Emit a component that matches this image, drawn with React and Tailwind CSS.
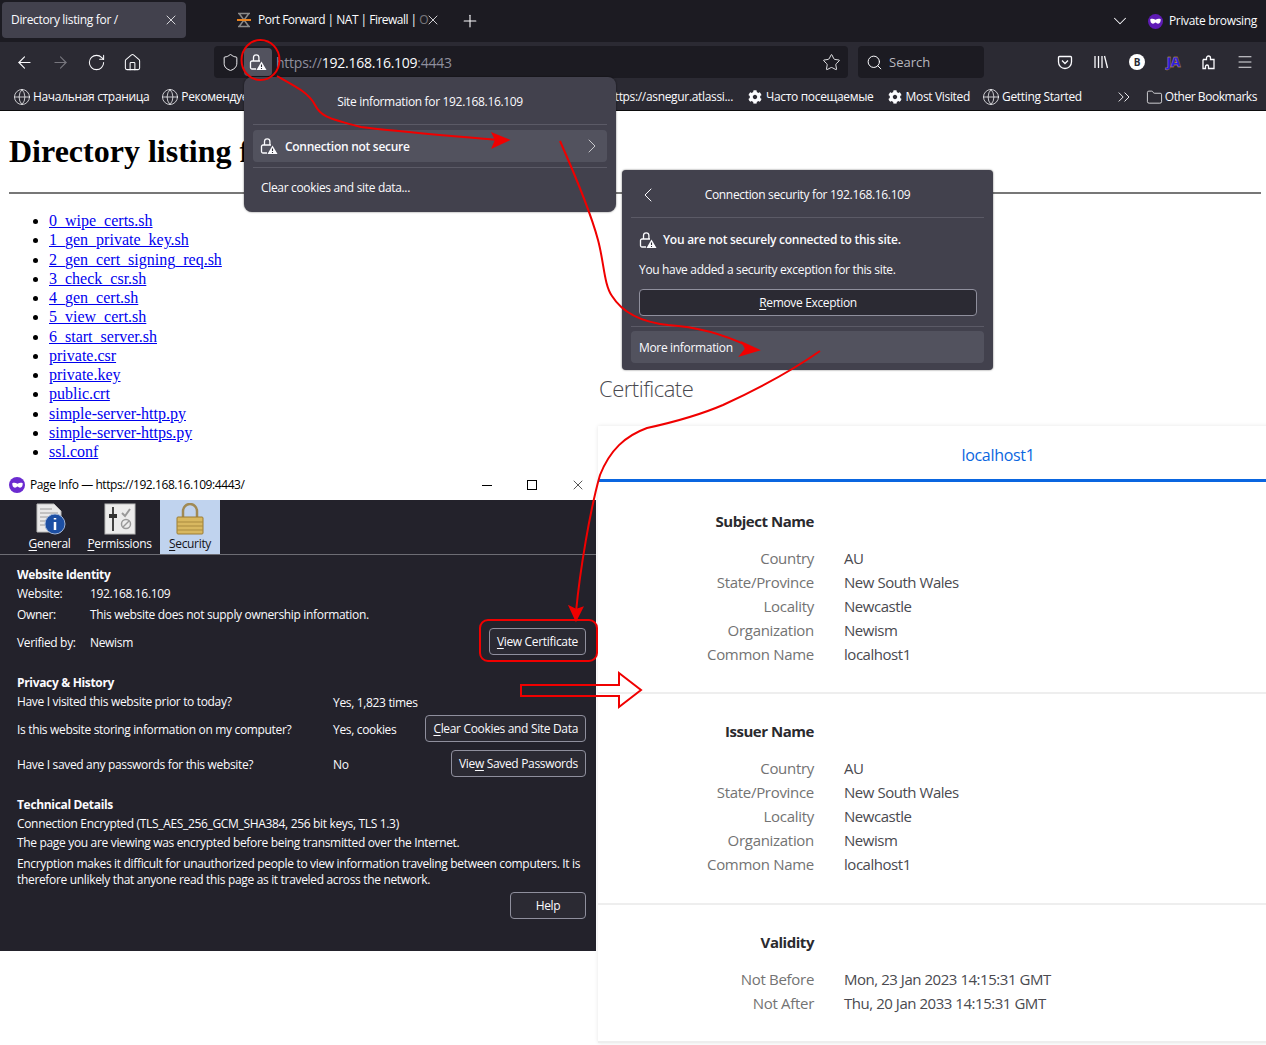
import {
  ArrowLeft,
  ArrowRight,
  RotateCw,
  Home,
  Shield,
  Star,
  Search,
  Globe,
  X,
  Plus,
  ChevronDown,
  ChevronRight,
  ChevronLeft,
  ChevronsRight,
  Folder,
  Menu,
} from 'lucide-react';
import { FaCog } from 'react-icons/fa';

const ui = { fontFamily: '"Open Sans", "Noto Sans", sans-serif' };

const files = [
  '0_wipe_certs.sh',
  '1_gen_private_key.sh',
  '2_gen_cert_signing_req.sh',
  '3_check_csr.sh',
  '4_gen_cert.sh',
  '5_view_cert.sh',
  '6_start_server.sh',
  'private.csr',
  'private.key',
  'public.crt',
  'simple-server-http.py',
  'simple-server-https.py',
  'ssl.conf',
];

const LockWarn = ({ className = 'w-[18px] h-[18px]' }) => (
  <svg viewBox="0 0 18 18" className={className} fill="none">
    <path d="M4.500 8V4.500a2.700 2.700 0 0 1 5.400 0V8" stroke="#fbfbfe" strokeWidth="1.300" />
    <path d="M7 16H3A1.500 1.500 0 0 1 1.500 14.500V9.500A1.500 1.500 0 0 1 3 8H11" stroke="#fbfbfe" strokeWidth="1.300" />
    <path d="M12.500 8.500l5 8.500h-10z" fill="#fbfbfe" />
    <path d="M12.500 11.500v2.500M12.500 15v1" stroke="#2b2a33" strokeWidth="1.100" />
  </svg>
);

const PrivateMask = () => (
  <svg viewBox="0 0 12 8" className="h-[7px] w-[11px]">
    <path d="M0 1.500C2 .500 4 1 6 2c2-1 4-1.500 6-.500 0 3-1 5-3 5-1.500 0-2-1.500-3-1.500S4.500 6.500 3 6.500c-2 0-3-2-3-5z" fill="#fff" />
  </svg>
);

const Bookmark = ({ icon = 'globe', children }) => (
  <div className="flex shrink-0 items-center whitespace-nowrap">
    {icon === 'globe' ? <Globe size={18} strokeWidth={1} /> : <FaCog size={14} className="mx-[2px]" />}
    <span className="ml-[2px]">{children}</span>
  </div>
);

const U = ({ children }) => <span className="underline underline-offset-2">{children}</span>;

const DialogButton = ({ children, className = '' }) => (
  <button className={`h-[27px] whitespace-nowrap rounded-[4px] border border-[#8f8f9d] bg-[#2b2a33] px-[7px] text-[12px] text-[#fbfbfe] ${className}`}>
    {children}
  </button>
);

const CertRow = ({ label, value }) => (
  <div className="flex h-[24px] items-center">
    <div className="w-[216px] text-right tracking-[-0.3px] text-[#737373]">{label}</div>
    <div className="ml-[30px] text-[#4a4a4f]">{value}</div>
  </div>
);

const CertSection = ({ title, rows, className = '' }) => (
  <section className={`border-b-2 border-[#eeeeee] ${className}`}>
    <div className="flex h-[24px] items-center">
      <div className="w-[216px] text-right font-bold text-[#2a2a2e]">{title}</div>
    </div>
    <div className="mt-[13px]">
      {rows.map(([label, value]) => (
        <CertRow key={label} label={label} value={value} />
      ))}
    </div>
  </section>
);

const names = [
  ['Country', 'AU'],
  ['State/Province', 'New South Wales'],
  ['Locality', 'Newcastle'],
  ['Organization', 'Newism'],
  ['Common Name', 'localhost1'],
];

function TabBar() {
  return (
    <div className="flex h-[42px] items-center bg-[#1c1b22] pl-[2px] text-[12px] tracking-[-0.33px] text-[#fbfbfe]">
      <div className="mt-[-2px] flex h-[36px] w-[184px] items-center justify-between rounded-[4px] bg-[#42414d] pl-[9px] pr-[7px]">
        <span>Directory listing for /</span>
        <X size={16} strokeWidth={1.200} />
      </div>
      <div className="ml-[50px] mt-[-2px] flex w-[204px] items-center">
        <svg viewBox="0 0 16 16" className="mr-[6px] h-[16px] w-[16px] shrink-0" fill="none">
          <path d="M2 1.500h12M2 14.500h12M3.500 2l4.500 6-4.500 6M12.500 2L8 8l4.500 6" stroke="#8a8a8a" strokeWidth="1.500" />
          <path d="M1 8h14" stroke="#e8821e" strokeWidth="2" />
        </svg>
        <span className="whitespace-nowrap tracking-[-0.52px]">Port Forward | NAT | Firewall | <span className="opacity-40">O</span></span>
        <X size={16} strokeWidth={1.200} className="absolute left-[425px] top-[12px]" />
      </div>
      <Plus size={20} strokeWidth={1.300} className="ml-[20px]" />
      <div className="ml-auto flex items-center pr-[9px]">
        <ChevronDown size={22} strokeWidth={1.100} />
        <div className="ml-[17px] flex h-[15px] w-[15px] items-center justify-center rounded-full bg-[#5e1bb5]">
          <PrivateMask />
        </div>
        <span className="ml-[6px]">Private browsing</span>
      </div>
    </div>
  );
}

function NavBar() {
  return (
    <div className="flex h-[40px] items-center bg-[#2b2a33] text-[#fbfbfe]">
      <div className="ml-[15px] flex w-[129px] items-center gap-[17px]">
        <ArrowLeft size={19} strokeWidth={1.400} />
        <ArrowRight size={19} strokeWidth={1.400} className="text-[#77767e]" />
        <RotateCw size={19} strokeWidth={1.300} />
        <Home size={19} strokeWidth={1.300} />
      </div>
      <div className="ml-[70px] flex h-[32px] w-[634px] items-center rounded-[4px] bg-[#1c1b22] text-[14px] tracking-[-0.25px]">
        <Shield size={19} strokeWidth={1.200} className="ml-[7px]" />
        <div className="ml-[4px] flex h-[28px] w-[28px] items-center justify-center rounded-[4px] bg-[#52525e]">
          <LockWarn />
        </div>
        <div className="ml-[4px]">
          <span className="text-[#8f8f9d]">https://</span>
          <span>192.168.16.109</span>
          <span className="text-[#8f8f9d]">:4443</span>
        </div>
        <Star size={19} strokeWidth={1.100} className="ml-auto mr-[7px]" />
      </div>
      <div className="ml-[10px] flex h-[32px] w-[126px] items-center rounded-[4px] bg-[#1c1b22] pl-[8px] pt-[1px] text-[13px] text-[#b8b8bf]">
        <Search size={17} strokeWidth={1.400} className="text-[#fbfbfe]" />
        <span className="ml-[6px]">Search</span>
      </div>
      <div className="ml-auto flex items-center gap-[20px] pr-[13px]">
        <svg viewBox="0 0 16 16" className="h-[16px] w-[16px]" fill="none" stroke="#fbfbfe" strokeWidth="1.300">
          <path d="M2.500 2.500h11a1 1 0 0 1 1 1V8a6.500 6.500 0 0 1-13 0V3.500a1 1 0 0 1 1-1z" />
          <path d="M5 6.500l3 3 3-3" />
        </svg>
        <svg viewBox="0 0 16 16" className="h-[16px] w-[16px]" fill="none" stroke="#fbfbfe" strokeWidth="1.300">
          <path d="M2 2v12M5.500 2v12M9 2v12M11.500 2l3 12" />
        </svg>
        <div className="flex h-[16px] w-[16px] items-center justify-center rounded-full bg-white text-[10px] font-bold text-[#2b2a33]">B</div>
        <div className="w-[16px] text-center text-[14px] font-extrabold leading-none tracking-[-1px] text-[#2a1fe0] [-webkit-text-stroke:0.3px_#e0b020]">JA</div>
        <svg viewBox="0 0 16 16" className="h-[16px] w-[16px]" fill="none" stroke="#fbfbfe" strokeWidth="1.300">
          <path d="M2 5.500h3.500V4a2 2 0 0 1 4 0v1.500H13V9M13 9v5.500H7.500V12.500a1.500 1.500 0 0 0-3 0v2H2V5.500" />
        </svg>
        <Menu size={18} strokeWidth={1.200} className="mx-[-1px]" />
      </div>
    </div>
  );
}

function BookmarksBar() {
  return (
    <div className="flex h-[29px] items-center border-b border-[#0c0c0d] bg-[#2b2a33] pl-[13px] pr-[9px] pt-[2px] text-[12px] tracking-[-0.33px] text-[#fbfbfe]">
      <div className="flex w-[591px] shrink-0 items-center overflow-hidden">
        <Bookmark>Начальная страница</Bookmark>
        <div className="ml-[12px]"><Bookmark>Рекомендуемые сайты</Bookmark></div>
      </div>
      <span className="w-[129px] shrink-0 whitespace-nowrap text-right">https://asnegur.atlassi...</span>
      <div className="ml-[13px]"><Bookmark icon="gear">Часто посещаемые</Bookmark></div>
      <div className="ml-[12px]"><Bookmark icon="gear">Most Visited</Bookmark></div>
      <div className="ml-[12px]"><Bookmark>Getting Started</Bookmark></div>
      <ChevronsRight size={20} strokeWidth={1.100} className="ml-auto shrink-0" />
      <div className="ml-[12px] flex shrink-0 items-center">
        <Folder size={17} strokeWidth={1.100} />
        <span className="ml-[2px] tracking-[-0.45px]">Other Bookmarks</span>
      </div>
    </div>
  );
}

function PageInfo() {
  return (
    <div style={ui} className="h-[481px] text-[12px] tracking-[-0.33px] text-[#fbfbfe]">
      <div className="flex h-[30px] items-center bg-white pl-[9px] text-[#000]">
        <div className="flex h-[16px] w-[16px] items-center justify-center rounded-full bg-[#6b2bd0]">
          <PrivateMask />
        </div>
        <span className="ml-[5px] tracking-[-0.42px]">Page Info — https://192.168.16.109:4443/</span>
        <div className="ml-auto flex items-center">
          <div className="h-px w-[10px] bg-black" />
          <div className="ml-[35px] h-[10px] w-[10px] border border-black" />
          <X size={16} strokeWidth={1} className="ml-[33px] mr-[10px]" />
        </div>
      </div>
      <div className="h-[451px] bg-[#23222b]">
        <div className="flex h-[55px] border-b border-[#6d6d74]">
          <div className="ml-[20px] flex w-[59px] flex-col items-center pt-[3px]">
            <svg viewBox="0 0 32 32" className="h-[32px] w-[32px]">
              <path d="M3 1h17l7 7v21H3z" fill="#e9e9e9" stroke="#bbb" />
              <path d="M6 6h12M6 10h18M6 14h12M6 18h10M6 22h10" stroke="#9a9a9a" />
              <circle cx="21" cy="21" r="10" fill="#1c4fa3" stroke="#9fb4d6" />
              <path d="M21 15v1.500M21 19v8" stroke="#fff" strokeWidth="2.500" />
            </svg>
            <span className="mt-[2px] leading-[14px]"><U>G</U>eneral</span>
          </div>
          <div className="flex w-[81px] flex-col items-center pt-[3px]">
            <svg viewBox="0 0 32 32" className="h-[32px] w-[32px]">
              <rect x="1" y="1" width="30" height="30" fill="#ececec" stroke="#bbb" />
              <path d="M9 4v24" stroke="#444" strokeWidth="2" />
              <rect x="5" y="11" width="8" height="4" fill="#333" />
              <path d="M18 10l3 3 5-7" stroke="#999" strokeWidth="2" fill="none" />
              <circle cx="22" cy="21" r="4.500" fill="none" stroke="#999" strokeWidth="1.500" />
              <path d="M19 24l6-6" stroke="#999" strokeWidth="1.500" />
            </svg>
            <span className="mt-[2px] leading-[14px]"><U>P</U>ermissions</span>
          </div>
          <div className="flex w-[60px] flex-col items-center bg-[#c0d3ee] pt-[3px] text-[#15141a]">
            <svg viewBox="0 0 32 32" className="h-[32px] w-[32px]">
              <path d="M9 15V8a7 7 0 0 1 14 0v7" fill="none" stroke="#a08a55" strokeWidth="2.500" />
              <rect x="3" y="14" width="26" height="17" rx="1" fill="#d8b860" stroke="#9c7c33" />
              <path d="M3 19h26M3 23h26M3 27h26" stroke="#a98a3f" />
            </svg>
            <span className="mt-[2px] leading-[14px]"><U>S</U>ecurity</span>
          </div>
        </div>

        <div className="px-[17px]">
          <h3 className="mt-[12px] font-bold leading-[16px]">Website Identity</h3>
          <div className="mt-[3px] flex h-[16px] items-center">
            <span className="w-[73px]">Website:</span>
            <span>192.168.16.109</span>
          </div>
          <div className="mt-[5px] flex h-[16px] items-center">
            <span className="w-[73px]">Owner:</span>
            <span>This website does not supply ownership information.</span>
          </div>
          <div className="mt-[5px] flex h-[27px] items-center justify-between">
            <div className="flex pt-[3px]">
              <span className="w-[73px]">Verified by:</span>
              <span>Newism</span>
            </div>
            <DialogButton className="mr-[-7px]"><U>V</U>iew Certificate</DialogButton>
          </div>

          <h3 className="mt-[20px] font-bold leading-[16px]">Privacy &amp; History</h3>
          <div className="mt-[3px] flex h-[16px] items-center">
            <span className="w-[316px]">Have I visited this website prior to today?</span>
            <span className="pt-[1px]">Yes, 1,823 times</span>
          </div>
          <div className="mt-[5px] flex h-[27px] items-center">
            <span className="w-[316px] pt-[2px]">Is this website storing information on my computer?</span>
            <span className="pt-[2px]">Yes, cookies</span>
            <DialogButton className="ml-auto mr-[-7px]"><U>C</U>lear Cookies and Site Data</DialogButton>
          </div>
          <div className="mt-[8px] flex h-[27px] items-center">
            <span className="w-[316px] pt-[2px]">Have I saved any passwords for this website?</span>
            <span className="pt-[2px]">No</span>
            <DialogButton className="ml-auto mr-[-7px]">Vie<U>w</U> Saved Passwords</DialogButton>
          </div>

          <h3 className="mt-[20px] font-bold leading-[16px]">Technical Details</h3>
          <p className="mt-[3px] leading-[16px]">Connection Encrypted (TLS_AES_256_GCM_SHA384, 256 bit keys, TLS 1.3)</p>
          <p className="mt-[3px] leading-[16px]">The page you are viewing was encrypted before being transmitted over the Internet.</p>
          <p className="mt-[5px] w-[574px] leading-[16px]">Encryption makes it difficult for unauthorized people to view information traveling between computers. It is therefore unlikely that anyone read this page as it traveled across the network.</p>
          <div className="mt-[4px] flex justify-end">
            <DialogButton className="mr-[-7px] w-[76px]">Help</DialogButton>
          </div>
        </div>
      </div>
    </div>
  );
}

function Certificate() {
  return (
    <div style={ui} className="pt-[162px]">
      <h1 className="pl-[3px] text-[22px] font-light leading-[30px] tracking-[-0.5px] text-[#4a4a4f]">Certificate</h1>
      <div className="ml-[2px] mt-[23px] w-[800px] text-[15px] tracking-[-0.46px] shadow-[0_0_4px_rgba(0,0,0,0.1)]">
        <div className="flex h-[56px] items-center justify-center border-b-[3px] border-[#0a66e0] pt-[4px] text-[16px] tracking-[-0.3px] text-[#0a66e0]">localhost1</div>
        <CertSection title="Subject Name" rows={names} className="h-[212px] pt-[27px]" />
        <CertSection title="Issuer Name" rows={names} className="h-[211px] pt-[25px]" />
        <CertSection
          title="Validity"
          className="h-[138px] pt-[25px]"
          rows={[
            ['Not Before', 'Mon, 23 Jan 2023 14:15:31 GMT'],
            ['Not After', 'Thu, 20 Jan 2033 14:15:31 GMT'],
          ]}
        />
      </div>
    </div>
  );
}

function Popups() {
  return (
    <div style={ui} className="text-[12px] tracking-[-0.33px] text-[#fbfbfe]">
      <div className="absolute left-[244px] top-[77px] h-[135px] w-[372px] rounded-[8px] bg-[#42414d] px-[9px] shadow-[0_0_2px_rgba(0,0,0,0.6)]">
        <div className="flex h-[48px] items-center justify-center border-b border-[#5b5a66] pt-[2px]">Site information for 192.168.16.109</div>
        <div className="mt-[5px] flex h-[32px] items-center rounded-[4px] bg-[#52525e] pl-[7px] pr-[3px] font-semibold">
          <LockWarn />
          <span className="ml-[7px] pt-[1px] tracking-[-0.28px]">Connection not secure</span>
          <ChevronRight size={24} strokeWidth={1} className="ml-auto text-[#c8c8cc]" />
        </div>
        <div className="mt-[5px] flex h-[41px] items-center border-t border-[#5b5a66] pl-[8px]">Clear cookies and site data...</div>
      </div>

      <div className="absolute left-[622px] top-[170px] h-[200px] w-[371px] rounded-[4px] bg-[#42414d] px-[9px] shadow-[0_0_2px_rgba(0,0,0,0.6)]">
        <div className="relative flex h-[48px] items-center justify-center border-b border-[#5b5a66] pt-[2px]">
          <ChevronLeft size={24} strokeWidth={1} className="absolute left-[5px]" />
          <span>Connection security for 192.168.16.109</span>
        </div>
        <div className="px-[8px]">
          <div className="mt-[13px] flex h-[18px] items-center font-semibold">
            <LockWarn />
            <span className="ml-[6px] tracking-[-0.26px]">You are not securely connected to this site.</span>
          </div>
          <p className="mt-[13px] leading-[16px]">You have added a security exception for this site.</p>
          <button className="mt-[11px] h-[27px] w-[338px] rounded-[4px] border border-[#8f8f9d] bg-[#2b2a33]"><U>R</U>emove Exception</button>
        </div>
        <div className="mt-[10px] border-t border-[#5b5a66] pt-[4px]">
          <div className="flex h-[32px] items-center rounded-[4px] bg-[#52525e] pl-[8px] pt-[1px]">More information</div>
        </div>
      </div>
    </div>
  );
}

function Annotations() {
  return (
    <svg viewBox="0 0 1266 1045" className="pointer-events-none absolute left-0 top-0 h-[1045px] w-[1266px]" fill="none" stroke="#f00000" strokeWidth="2">
      <ellipse cx="260.500" cy="60" rx="19" ry="20" />
      <path d="M277 76C295 86 309 93 315 105C320 115 325 118 361 127C390 131 442 135 498 140" />
      <path d="M508 140L493 134L496 140L493 147Z" fill="#f00000" />
      <path d="M560 141C575 175 590 210 598 240C604 262 604 285 612 296C622 312 640 322 668 325C700 327 725 335 748 346" />
      <path d="M758 350L743 343L746 349L741 355Z" fill="#f00000" />
      <path d="M820 351C790 372 760 388 723 405C695 417 670 423 647 428C625 436 610 450 600 475C590 510 580 570 576 612" />
      <path d="M576 620L570 607L576 610L582 608Z" fill="#f00000" />
      <rect x="480" y="620" width="117" height="41" rx="8" />
      <path d="M521 685H619V673L641 690L619 707V696H521Z" />
    </svg>
  );
}

export default function App() {
  return (
    <div className="relative h-[1045px] w-[1266px] overflow-hidden bg-white">
      <div style={ui}>
        <TabBar />
        <NavBar />
        <BookmarksBar />
      </div>
      <div className="grid grid-cols-[596px_minmax(0,1fr)] font-['Liberation_Serif',serif]">
        <div className="col-span-2 h-[100px] pl-[9px] pr-[5px] pt-[22px]">
          <h1 className="text-[32px] font-bold leading-[37px] text-black">Directory listing for /</h1>
          <hr className="mt-[22px] border-t-2 border-[#777]" />
        </div>
        <div>
          <ul className="h-[259px] list-disc pl-[49px] text-[16px] leading-[19.250px]">
            {files.map((f) => (
              <li key={f}><a href="#" className="text-[#0000ee] underline">{f}</a></li>
            ))}
          </ul>
          <PageInfo />
        </div>
        <Certificate />
      </div>
      <Popups />
      <Annotations />
    </div>
  );
}
